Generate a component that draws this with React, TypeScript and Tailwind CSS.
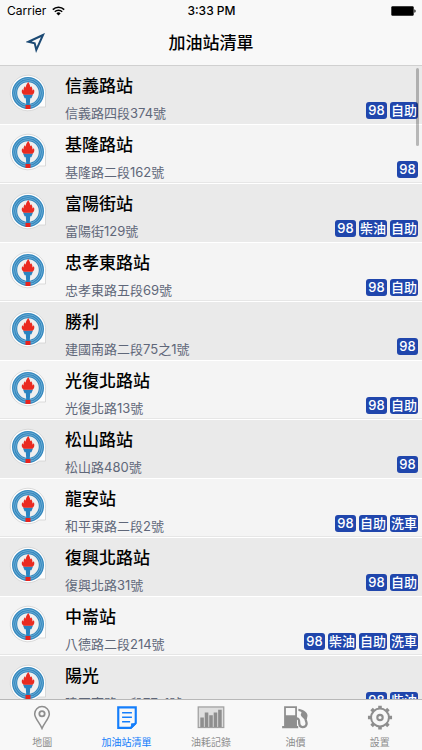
import { useState, type ReactNode } from "react";
import clsx from "clsx";

type Station = {
  name: string;
  address: string;
  tags: string[];
};

const stations: Station[] = [
  { name: "信義路站", address: "信義路四段374號", tags: ["98", "自助"] },
  { name: "基隆路站", address: "基隆路二段162號", tags: ["98"] },
  { name: "富陽街站", address: "富陽街129號", tags: ["98", "柴油", "自助"] },
  { name: "忠孝東路站", address: "忠孝東路五段69號", tags: ["98", "自助"] },
  { name: "勝利", address: "建國南路二段75之1號", tags: ["98"] },
  { name: "光復北路站", address: "光復北路13號", tags: ["98", "自助"] },
  { name: "松山路站", address: "松山路480號", tags: ["98"] },
  { name: "龍安站", address: "和平東路二段2號", tags: ["98", "自助", "洗車"] },
  { name: "復興北路站", address: "復興北路31號", tags: ["98", "自助"] },
  { name: "中崙站", address: "八德路二段214號", tags: ["98", "柴油", "自助", "洗車"] },
  { name: "陽光", address: "建國南路一段77-1號", tags: ["98", "柴油"] },
];

function WifiIcon() {
  return (
    <svg width="13" height="10" viewBox="0 0 13 10" fill="none" aria-hidden="true">
      <path d="M.8 3.6a8.2 8.2 0 0 1 11.4 0" stroke="#000" strokeWidth="1.6" />
      <path d="M2.8 5.8a5.3 5.3 0 0 1 7.4 0" stroke="#000" strokeWidth="1.5" />
      <path d="M6.5 9.6 4.4 7.4a3 3 0 0 1 4.2 0z" fill="#000" />
    </svg>
  );
}

function BatteryIcon() {
  return (
    <svg width="25" height="10" viewBox="0 0 25 10" aria-hidden="true">
      <rect x=".3" y=".3" width="22.4" height="9.4" rx="1.2" fill="#000" />
      <path d="M23.4 3.2c1.6.4 1.6 3.2 0 3.6z" fill="#000" />
    </svg>
  );
}

function StationLogo() {
  return (
    <svg width="38" height="38" viewBox="0 0 38 38" className="shrink-0" aria-hidden="true">
      {/* speech-bubble style badge with a small tail at the lower right */}
      <path
        d="M19 1.2a17.8 17.8 0 1 0 11 31.800h6.500V21.500A17.800 17.800 0 0 0 19 1.200z"
        fill="#fdfdfd"
        stroke="#cdcdcd"
        strokeWidth=".7"
      />
      <circle cx="19" cy="19" r="13.400" fill="#efefef" stroke="#3488be" strokeWidth="5.200" />
      <circle cx="19" cy="19" r="14.400" fill="none" stroke="#8fc3e2" strokeWidth=".6" />
      <circle cx="19" cy="19" r="12.400" fill="none" stroke="#8fc3e2" strokeWidth=".6" />
      <path d="M14 20.500h10l-1.600 3.700h-1.200l-.5 7.400h-3.400l-.5-7.400h-1.200z" fill="#2a83c0" />
      <path
        d="M14.800 20.800c-2-1-2.600-3.300-1.600-5.600l1.400 1.200c-.2-1.700.2-3 1.200-4.200l.8 1.500c.2-2.200 1.200-3.800 2.600-5.700 1 1.700 2 3.300 2 5.300l1-1c1 1.300 1.400 2.600 1.200 4.200l1.500-1.300c1 2.300.3 4.700-1.700 5.600z"
        fill="#ea2a20"
      />
      <rect x="16.500" y="31" width="5" height="4" fill="#e8231d" />
    </svg>
  );
}

function PinIcon() {
  return (
    <svg width="30" height="28" viewBox="0 0 30 28" fill="none" stroke="currentColor" aria-hidden="true">
      <path d="M15 26.200C12.600 20.400 6.800 14.600 6.800 10a8.200 8.200 0 0 1 16.400 0c0 4.600-5.800 10.400-8.200 16.200z" strokeWidth="1.700" />
      <circle cx="15" cy="9.800" r="3" strokeWidth="2" />
    </svg>
  );
}

function ListIcon() {
  return (
    <svg width="30" height="28" viewBox="0 0 30 28" fill="none" stroke="currentColor" aria-hidden="true">
      <path d="M5.200 2.600h19.600v17.600l-5.600 5.400H5.200z" strokeWidth="2.400" />
      <path d="M20 26v-5h5z" fill="currentColor" strokeWidth="1" />
      <path d="M9.500 8.700h11M9.500 13.700h11M9.500 18.700h9" strokeWidth="1.700" />
    </svg>
  );
}

function ChartIcon() {
  return (
    <svg width="30" height="28" viewBox="0 0 30 28" aria-hidden="true">
      <rect x=".7" y="2.200" width="28.600" height="23" fill="#dedede" stroke="#a0a0a0" strokeWidth="1.400" />
      <path
        d="M3 14h4v10.500H3zM8 8.500h4v16H8zM13 11.500h4v13h-4zM18 8.500h4v16h-4zM23 5.200h4v19.300h-4z"
        fill="#8e8e8e"
      />
    </svg>
  );
}

function PumpIcon() {
  return (
    <svg width="30" height="28" viewBox="0 0 30 28" fill="none" aria-hidden="true">
      <path d="M2.800 1.500h14.400v22h1.400v2.500H.6v-2.500h2.200zM4.800 3.400v8.200h10.400V3.400z" fill="currentColor" fillRule="evenodd" />
      <path
        d="M16.500 15c3.800 0 3 2.600 3.200 5.400.2 3.400 1.300 4.300 3.600 4.300 3 0 4.900-1.600 4.700-4.300-.2-2.200-1.300-3.600-1.600-6"
        stroke="currentColor"
        strokeWidth="2.600"
      />
      <path
        d="M18.800 4.200c3.700.4 10 3.400 10.200 7.200.1 1.800-.7 2.800-.6 4.400h-3.200c-.8-1.500-3.300-2.600-3.700-4.600-.3-1.500 1.200-2.300.6-3.400-.4-.8-1.600-.7-3.300-1.200z"
        fill="currentColor"
      />
    </svg>
  );
}

function GearIcon() {
  return (
    <svg width="30" height="28" viewBox="0 0 30 28" fill="none" stroke="currentColor" aria-hidden="true">
      <circle cx="15" cy="14" r="10" strokeWidth="2.200" />
      <circle cx="15" cy="14" r="3" strokeWidth="2.400" />
      <path
        d="M15 .7V4M15 24v3.300M1.500 14H5M25 14h3.500M5.600 4.600l2.300 2.300M22.100 21.100l2.300 2.300M5.600 23.400l2.300-2.300M22.100 6.900l2.300-2.300"
        strokeWidth="4"
      />
    </svg>
  );
}

const tabs: { id: string; label: string; icon: ReactNode }[] = [
  { id: "map", label: "地圖", icon: <PinIcon /> },
  { id: "list", label: "加油站清單", icon: <ListIcon /> },
  { id: "records", label: "油耗記錄", icon: <ChartIcon /> },
  { id: "price", label: "油價", icon: <PumpIcon /> },
  { id: "settings", label: "設置", icon: <GearIcon /> },
];

function StationRow({ station }: { station: Station }) {
  return (
    <li className="flex h-[59px] shrink-0 items-start border-b border-white pt-2 pl-[9px] pr-1 odd:bg-[#eaeaea] even:bg-[#f4f4f4] even:shadow-[inset_0_-1px_0_#e6e6e6]">
      <StationLogo />
      <div className="min-w-0 flex-1 pl-[18px]">
        <h2 className="text-[17px] leading-6 font-medium text-black">{station.name}</h2>
        <div className="flex items-center justify-between">
          <p className="pt-[5px] text-[13px] leading-5 text-[#5f6779]">{station.address}</p>
          <div className="flex gap-[3px]">
            {station.tags.map((tag) => (
              <span
                key={tag}
                className="h-[17px] min-w-[21px] rounded-[3px] bg-[#2046ac] px-px text-center text-[13px] leading-[17px] font-medium text-white"
              >
                {tag}
              </span>
            ))}
          </div>
        </div>
      </div>
    </li>
  );
}

export default function App() {
  const [active, setActive] = useState("list");

  return (
    <div className="flex h-screen flex-col overflow-hidden bg-[#f8f8f8] font-['Inter','Noto_Sans_CJK_TC',sans-serif]">
      <header className="shrink-0 border-b border-[#d0d0d0]">
        <div className="grid h-[21px] grid-cols-3 items-center pl-[7px] pr-[6px] text-[12px] leading-4 text-black">
          <div className="flex items-center gap-1.5">
            <span>Carrier</span>
            <WifiIcon />
          </div>
          <span className="text-center font-medium">3:33 PM</span>
          <div className="flex justify-end">
            <BatteryIcon />
          </div>
        </div>
        <div className="grid h-11 grid-cols-[1fr_auto_1fr] items-center px-5">
          <button type="button" aria-label="目前位置" className="flex size-8 items-center justify-center">
            <svg width="20" height="20" viewBox="0 0 20 20" fill="none" aria-hidden="true">
              <path d="M17 2 2.500 8.800l6.200 1.500 1.600 6.600z" stroke="#1c4a74" strokeWidth="2" />
            </svg>
          </button>
          <h1 className="text-[17px] leading-6 font-medium text-black">加油站清單</h1>
        </div>
      </header>

      <main className="relative min-h-0 flex-1 overflow-hidden">
        <ul className="flex flex-col">
          {stations.map((s) => (
            <StationRow key={s.name} station={s} />
          ))}
        </ul>
        <div className="absolute right-[3px] top-0.5 h-[78px] w-[3px] rounded-full bg-black/25" />
      </main>

      <nav className="flex h-[51px] shrink-0 border-t border-[#b8b8b8]">
        {tabs.map((t) => (
          <button
            key={t.id}
            type="button"
            onClick={() => setActive(t.id)}
            className={clsx(
              "flex flex-1 basis-0 flex-col items-center pt-[5px]",
              active === t.id ? "text-[#147efb]" : "text-[#8e8e8e]"
            )}
          >
            {t.icon}
            <span className="mt-1 text-[10px] leading-4 whitespace-nowrap">{t.label}</span>
          </button>
        ))}
      </nav>
    </div>
  );
}
